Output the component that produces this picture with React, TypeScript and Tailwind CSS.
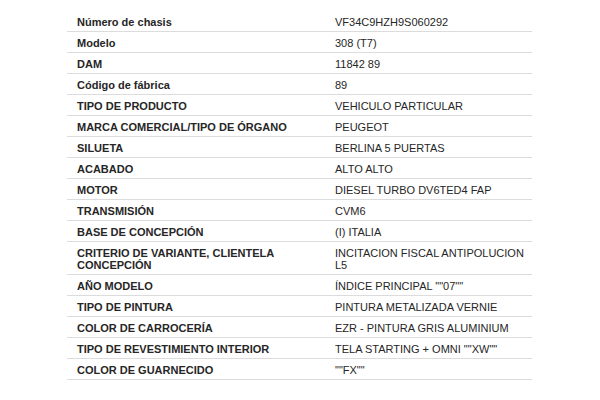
const rows: [string, string][] = [
  ["Número de chasis", "VF34C9HZH9S060292"],
  ["Modelo", "308 (T7)"],
  ["DAM", "11842 89"],
  ["Código de fábrica", "89"],
  ["TIPO DE PRODUCTO", "VEHICULO PARTICULAR"],
  ["MARCA COMERCIAL/TIPO DE ÓRGANO", "PEUGEOT"],
  ["SILUETA", "BERLINA 5 PUERTAS"],
  ["ACABADO", "ALTO ALTO"],
  ["MOTOR", "DIESEL TURBO DV6TED4 FAP"],
  ["TRANSMISIÓN", "CVM6"],
  ["BASE DE CONCEPCIÓN", "(I) ITALIA"],
  ["CRITERIO DE VARIANTE, CLIENTELA CONCEPCIÓN", "INCITACION FISCAL ANTIPOLUCION L5"],
  ["AÑO MODELO", "ÍNDICE PRINCIPAL \"\"07\"\""],
  ["TIPO DE PINTURA", "PINTURA METALIZADA VERNIE"],
  ["COLOR DE CARROCERÍA", "EZR - PINTURA GRIS ALUMINIUM"],
  ["TIPO DE REVESTIMIENTO INTERIOR", "TELA STARTING + OMNI \"\"XW\"\""],
  ["COLOR DE GUARNECIDO", "\"\"FX\"\""],
];

export default function App() {
  return (
    <div className="h-[400px] w-[600px] bg-white pt-[11px] font-['Liberation_Sans',Arial,sans-serif] text-[11px] leading-[12px] text-[#262626]">
      <div className="ml-[67px] w-[465px]">
        {rows.map(([label, value]) => (
          <div key={label} className="flex border-b border-[#dcdcdc]">
            <div className="w-[258px] shrink-0 pb-[3px] pl-[10px] pr-[8px] pt-[5px] font-bold">
              {label}
            </div>
            <div className="flex-1 pb-[3px] pl-[10px] pr-[6px] pt-[5px]">{value}</div>
          </div>
        ))}
      </div>
    </div>
  );
}
